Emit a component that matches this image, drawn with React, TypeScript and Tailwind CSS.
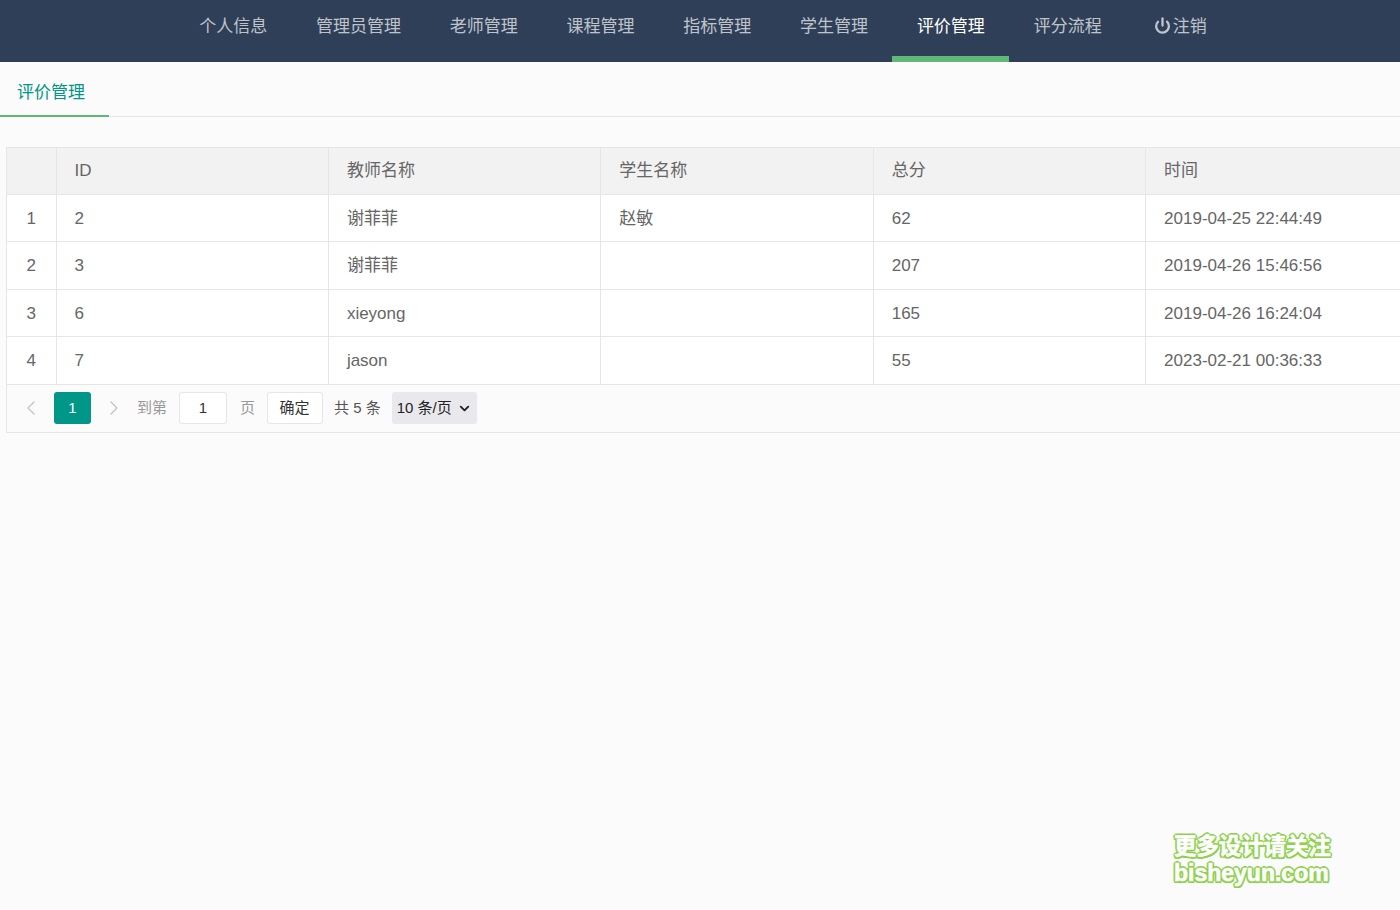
import React from 'react';
import { ChevronDown, ChevronLeft, ChevronRight, Power } from 'lucide-react';

const navItems = ['个人信息', '管理员管理', '老师管理', '课程管理', '指标管理', '学生管理', '评价管理', '评分流程'];

const rows = [
    { id: '2', teacher: '谢菲菲', student: '赵敏', score: '62', time: '2019-04-25 22:44:49' },
    { id: '3', teacher: '谢菲菲', student: '', score: '207', time: '2019-04-26 15:46:56' },
    { id: '6', teacher: 'xieyong', student: '', score: '165', time: '2019-04-26 16:24:04' },
    { id: '7', teacher: 'jason', student: '', score: '55', time: '2023-02-21 00:36:33' },
];

const headers = ['ID', '教师名称', '学生名称', '总分', '时间'];

export default function App() {
    return (
        <div className="relative h-[910px] w-[1400px] overflow-hidden bg-[#fbfbfb] font-['Liberation_Sans','Noto_Sans_CJK_SC',sans-serif] text-[17px] text-[#666666]">
            <header className="flex h-[62px] bg-[#2f3f58] pl-[174.8px]">
                {navItems.map(item => (
                    <a
                        key={item}
                        className={
                            item === '评价管理'
                                ? 'h-full border-b-[6px] border-[#5fb878] px-[24.4px] pt-[14px] leading-[26px] text-white'
                                : 'h-full px-[24.4px] pt-[14px] leading-[26px] text-[#ffffffb3]'
                        }
                    >
                        {item}
                    </a>
                ))}
                <a className="flex h-full items-start pl-[27.6px] pr-6 pt-[14px] leading-[26px] text-[#ffffffb3]">
                    <Power size={17} strokeWidth={3.25} className="mt-[3px] mr-[2px]" />
                    注销
                </a>
            </header>

            <div className="h-[55px] border-b border-[#e6e6e6]">
                <div className="h-[55px] w-[109px] border-b-2 border-[#5fb878] pl-[17px] pt-[18px] leading-[26px] text-[#009688]">
                    评价管理
                </div>
            </div>

            <div className="ml-[6px] mt-[30px] w-[1412.5px] border-l border-t border-[#e6e6e6]">
                <table className="w-full table-fixed border-collapse">
                    <thead>
                        <tr className="h-[46px] bg-[#f2f2f2]">
                            <th className="w-[49px] border-b border-r border-[#e6e6e6]"></th>
                            {headers.map(h => (
                                <th key={h} className="border-b border-r border-[#e6e6e6] px-[18px] text-left font-normal">
                                    {h}
                                </th>
                            ))}
                        </tr>
                    </thead>
                    <tbody className="bg-white">
                        {rows.map((row, i) => (
                            <tr key={row.id} className="h-[47.5px]">
                                <td className="border-b border-r border-[#e6e6e6] pt-[1px] text-center">{i + 1}</td>
                                <td className="border-b border-r border-[#e6e6e6] px-[18px] pt-[1px]">{row.id}</td>
                                <td className="border-b border-r border-[#e6e6e6] px-[18px] pt-[1px]">{row.teacher}</td>
                                <td className="border-b border-r border-[#e6e6e6] px-[18px] pt-[1px]">{row.student}</td>
                                <td className="border-b border-r border-[#e6e6e6] px-[18px] pt-[1px]">{row.score}</td>
                                <td className="border-b border-r border-[#e6e6e6] px-[18px] pt-[1px]">{row.time}</td>
                            </tr>
                        ))}
                    </tbody>
                </table>
                <div className="flex h-[48px] items-center border-b border-[#e6e6e6] pl-[12px] text-[15px]">
                    <ChevronLeft size={24} strokeWidth={1.25} className="text-[#c2c2c2]" />
                    <span className="ml-[11px] flex h-[32px] w-[37px] items-center justify-center rounded-[3px] bg-[#009688] text-white">1</span>
                    <ChevronRight size={24} strokeWidth={1.25} className="ml-[11px] text-[#c2c2c2]" />
                    <span className="ml-[11px] text-[#999999]">到第</span>
                    <span className="ml-[12px] flex h-[32px] w-[48px] items-center justify-center rounded-[3px] border border-[#e6e6e6] bg-white text-[#333333]">1</span>
                    <span className="ml-[13px] text-[#999999]">页</span>
                    <span className="ml-[11.5px] flex h-[32px] w-[56px] items-center justify-center rounded-[3px] border border-[#e6e6e6] bg-white text-[#333333]">确定</span>
                    <span className="ml-[11.5px] text-[#555555]">共 5 条</span>
                    <span className="ml-[11px] flex h-[32px] w-[85px] items-center justify-between rounded-[3px] bg-[#e9e9ed] pl-[5px] pr-[5px] text-[#222222]">
                        10 条/页
                        <ChevronDown size={15} strokeWidth={3} />
                    </span>
                </div>
            </div>

            {/* watermark sits over the page */}
            <div className="absolute left-[1174px] top-[833px] whitespace-nowrap text-[22.4px] font-bold leading-[27px] text-white [-webkit-text-stroke:0.6px_#ffffff] [text-shadow:2px_0_0_#8fd14f,-2px_0_0_#8fd14f,0_2px_0_#8fd14f,0_-2px_0_#8fd14f,1.5px_1.5px_0_#8fd14f,-1.5px_1.5px_0_#8fd14f,1.5px_-1.5px_0_#8fd14f,-1.5px_-1.5px_0_#8fd14f]">
                <div>更多设计请关注</div>
                <div className="text-[23px]">bisheyun.com</div>
            </div>
        </div>
    );
}
